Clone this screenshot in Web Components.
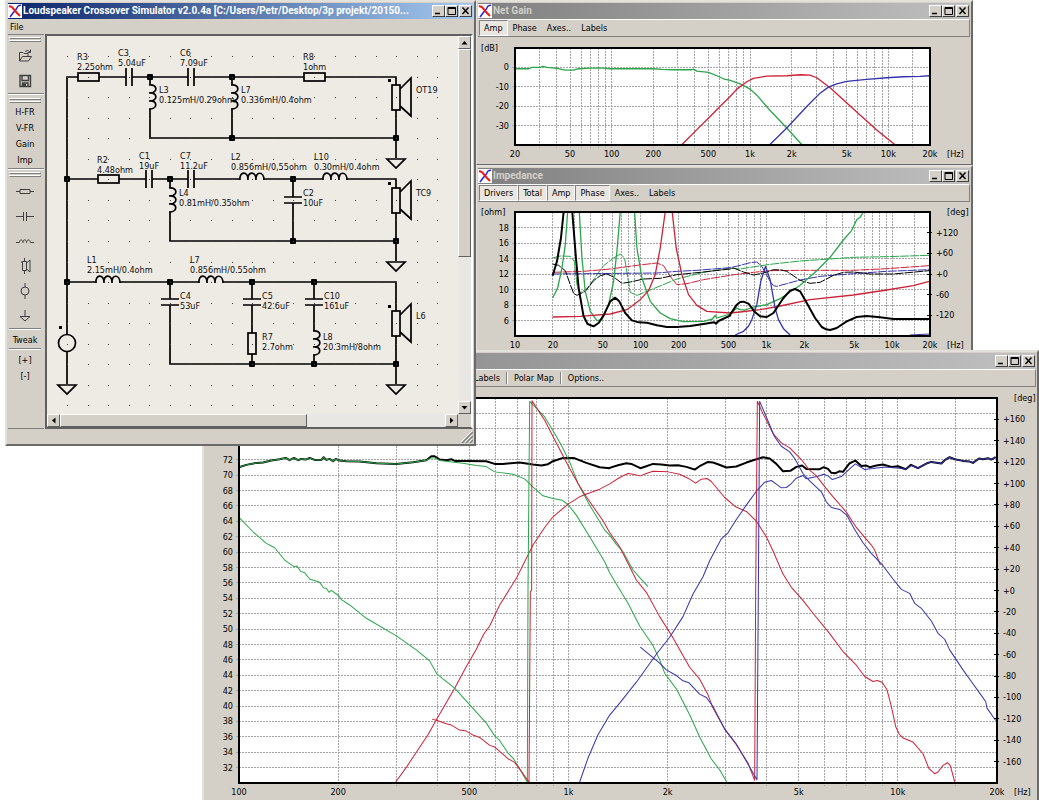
<!DOCTYPE html>
<html lang="en">
<head>
<meta charset="utf-8">
<title>Loudspeaker Crossover Simulator</title>
<style>
  html, body { height: 100%; }
  body {
    margin: 0; background: #fff; color: #000; overflow: hidden;
    font: 9px/12px "DejaVu Sans Condensed", "DejaVu Sans", sans-serif;
    --face: #d4d0c8; --shade: #808080; --light: #fff;
  }
</style>
</head>
<body>
<sim-desktop></sim-desktop>

<template id="t-desktop">
  <style>
    :host { display: block; position: relative; width: 100%; height: 100%; min-height: 800px; overflow: hidden; }
    sim-window { position: absolute; }
    .gain { left: 475px; top: 0; width: 498px; height: 166px; }
    .imp { left: 475px; top: 165px; width: 498px; height: 190px; }
    .resp { left: 202px; right: 0; top: 350px; height: 456px; }
    .main { left: 5px; top: 0; width: 471px; height: 446px; }
    .gain sim-chart { --left: 37px; --right: 40px; --plot: 97px; --top: 11px; }
    .imp sim-chart { --left: 37px; --right: 40px; --plot: 124px; --top: 10px; }
    .resp sim-chart { --left: 34px; --right: 39px; --plot: 385px; --top: 11px; }
  </style>
  <sim-window class="gain" caption="Net Gain">
    <tool-strip slot="bar" items="*Amp,Phase,Axes..,Labels"></tool-strip>
    <sim-chart kind="gain"></sim-chart>
  </sim-window>
  <sim-window class="imp" caption="Impedance">
    <tool-strip slot="bar" items="*Drivers,*Total,*Amp,*Phase,Axes..,Labels"></tool-strip>
    <sim-chart kind="imp"></sim-chart>
  </sim-window>
  <sim-window class="resp" caption="">
    <tool-strip slot="bar" class="far" items="Labels,|,Polar Map,|,Options.."></tool-strip>
    <sim-chart kind="resp"></sim-chart>
  </sim-window>
  <sim-window class="main" active caption="Loudspeaker Crossover Simulator v2.0.4a [C:/Users/Petr/Desktop/3p projekt/20150...">
    <sim-editor></sim-editor>
  </sim-window>
</template>

<template id="t-window">
  <style>
    :host {
      display: flex; flex-direction: column; box-sizing: border-box; overflow: hidden;
      padding: 1px; background: var(--face);
      border: 2px solid; border-color: #e4e1db #6a6a6a #6a6a6a #e4e1db;
    }
    header {
      flex: none; display: flex; align-items: center; gap: 1px; height: 16px;
      background: linear-gradient(90deg, #808080, #c0c0c0); color: #d4d0c8; padding: 0 1px 0 0;
    }
    :host([active]) header { background: linear-gradient(90deg, #0a246a, #a6caf0); color: #fff; }
    h1 { flex: 1; min-width: 0; margin: 0; font: bold 10px/14px Roboto, sans-serif; white-space: nowrap; overflow: hidden; }
    button {
      flex: none; width: 13px; height: 12px; padding: 0; margin: 0; background: var(--face);
      border: 1px solid; border-color: #fff #404040 #404040 #fff; display: block;
    }
    button svg { display: block; width: 11px; height: 10px; }
    .max { margin-left: -1px; }
    .icon { flex: none; width: 14px; height: 14px; background: #fff; }
  </style>
  <header>
    <svg class="icon" viewBox="0 0 14 14" aria-hidden="true">
      <path d="M2 13 L5 9 L8 5.500 L10 2 L13 1" fill="none" stroke="#2222e0" stroke-width="1.500"/>
      <path d="M1 2 L4 3 L9 9 L12 12" fill="none" stroke="#f01818" stroke-width="2"/>
    </svg>
    <h1></h1>
    <button aria-label="Minimize"><svg viewBox="0 0 11 10"><path d="M2 7.500H7" stroke="#000" stroke-width="1.500"/></svg></button>
    <button class="max" aria-label="Maximize"><svg viewBox="0 0 11 10"><path d="M2 1.500H9.500V8.500H2Z M2 2.500H9" fill="none" stroke="#000"/></svg></button>
    <button aria-label="Close"><svg viewBox="0 0 11 10"><path d="M2.500 1.500L8.500 8M8.500 1.500L2.500 8" stroke="#000" stroke-width="1.400"/></svg></button>
  </header>
  <slot name="bar"></slot>
  <slot></slot>
</template>

<template id="t-strip">
  <style>
    :host {
      flex: none; display: flex; align-items: stretch; box-sizing: border-box; height: 18px; padding: 0 1px;
      border-top: 1px solid #fff; border-right: 1px solid #808080; border-bottom: 1px solid #808080;
    }
    :host(.far) { padding-left: 264px; }
    button {
      font: inherit; color: inherit; background: none; border: 1px solid transparent; padding: 0 4px; margin: 0;
      white-space: nowrap;
    }
    button[aria-pressed=true] { background: #e9e6e1; border-color: #808080 #fff #fff #808080; }
    i { width: 1px; margin: 2px 1px; background: #808080; border-right: 1px solid #fff; }
  </style>
</template>

<template id="t-chart">
  <style>
    :host {
      flex: none; display: grid; padding-top: var(--top);
      grid-template-columns: var(--left) minmax(0, 1fr) var(--right);
      grid-template-rows: var(--plot) 17px;
    }
    svg { grid-area: 1 / 2; display: block; width: 100%; height: 100%; overflow: visible; }
    .y, .y2, .x { display: grid; }
    .y { grid-area: 1 / 1; }
    .y2 { grid-area: 1 / 3; }
    .x { grid-area: 2 / 2; align-items: center; }
    .y span, .y2 span { height: 0; display: flex; align-items: center; align-self: end; }
    .y span { justify-content: flex-end; padding-right: 6px; }
    .y2 span { padding-left: 6px; }
    .x span { width: 0; display: flex; justify-content: center; white-space: nowrap; }
    .unit { height: 0; display: flex; align-items: center; }
    .uy { grid-area: 1 / 1; padding-left: 3px; }
    .ux { grid-area: 2 / 3; padding-left: 17px; align-self: center; }
    .ud { grid-area: 1 / 3; padding-left: 17px; }
    .frame { fill: none; stroke: #000; stroke-width: 2; }
    .grid { stroke: #a4a4a4; stroke-dasharray: 2 1; fill: none; }
    .tick { stroke: #000; }
    polyline { fill: none; stroke-linejoin: round; }
    svg * { vector-effect: non-scaling-stroke; }
    .grid, .tick { shape-rendering: crispEdges; }
  </style>
  <div class="y"></div>
  <svg preserveAspectRatio="none" role="img"></svg>
  <div class="y2"></div>
  <div class="x"></div>
</template>

<template id="t-editor">
  <style>
    :host { flex: 1; min-height: 0; display: flex; flex-direction: column; }
    button { font: inherit; color: inherit; border: 0; background: none; padding: 0; margin: 0; }
    nav { flex: none; height: 15px; display: flex; align-items: center; padding-left: 2px; }
    .work { flex: 1; min-height: 0; display: flex; }
    .tools {
      flex: none; width: 36px; box-sizing: border-box; padding: 2px 3px 0 1px; display: flex; flex-direction: column; align-items: stretch;
      border-top: 1px solid #808080; border-bottom: 1px solid #808080; margin-right: 1px;
    }
    .tools button { height: 16px; flex: none; }
    .tools .pic { height: 25px; display: grid; place-items: center; }
    .grip { flex: none; height: 0; margin-bottom: 1px; border: 1px solid; border-color: #fff #808080 #808080 #fff; }
    .rule { flex: none; height: 1px; background: #808080; border-bottom: 1px solid #fff; margin: 0 -3px 0 -1px; }
    .short { margin: 0; }
    .gap { flex: none; height: 3px; }
    .gap.s { height: 2px; }
    .tools svg { display: block; width: 18px; height: 16px; fill: none; stroke: #404040; }
    .view {
      flex: 1; min-width: 0; display: grid; grid-template: minmax(0, 1fr) 13px / minmax(0, 1fr) 13px;
      border: 2px solid; border-color: #606060 #fff #606060 #606060; background: var(--face);
    }
    footer { flex: none; height: 14px; display: flex; justify-content: flex-end; align-items: flex-end; }
    footer svg { width: 12px; height: 12px; }
  </style>
  <nav><button>File</button></nav>
  <div class="work">
    <div class="tools">
      <div class="grip"></div><div class="grip"></div>
      <button class="pic" aria-label="Open"><svg viewBox="0 0 18 16"><path d="M3.500 13V4.500H7L8 5.500H12V8M3.500 13L6.500 8.500H15.500L12.500 13ZM9 3.500Q12 1 14 4M14.500 1.500V4.500H11.500"/></svg></button>
      <button class="pic" aria-label="Save"><svg viewBox="0 0 18 16"><path d="M4 2.500H14.500V13.500H4ZM6 2.500V7.500H12.500V2.500M6.500 13.500V10H12V13.500" stroke-width="1.400"/><path d="M7 11H9.500V13.500H7Z" fill="#404040"/></svg></button>
      <div class="rule"></div><div class="gap"></div>
      <div class="grip"></div><div class="grip"></div>
      <button>H-FR</button><button>V-FR</button><button>Gain</button><button>Imp</button>
      <div class="rule"></div><div class="gap s"></div>
      <div class="grip"></div><div class="grip"></div>
      <button class="pic" aria-label="Resistor"><svg viewBox="0 0 18 16"><path d="M0 8.500H4M14 8.500H18M4 6.500H14V10.500H4Z"/></svg></button>
      <button class="pic" aria-label="Capacitor"><svg viewBox="0 0 18 16"><path d="M0 8.500H7M11 8.500H18M7.500 4V13M10.500 4V13"/></svg></button>
      <button class="pic" aria-label="Inductor"><svg viewBox="0 0 18 16"><path d="M0 9.500H3.500C3.500 6 6.500 6 7 9.500C7 6 10.500 6 10.500 9.500C11 6 14 6 14.500 9.500H18"/></svg></button>
      <button class="pic" aria-label="Driver"><svg viewBox="0 0 18 16"><path d="M8.500 0V3M8.500 13V16M6.500 3.500H10.500V12.500H6.500ZM10.500 5L14 2V14L10.500 11M5 4H6.500"/></svg></button>
      <button class="pic" aria-label="Source"><svg viewBox="0 0 18 16"><circle cx="9" cy="8" r="4"/><path d="M9 0V4M9 12V16"/></svg></button>
      <button class="pic" aria-label="Ground"><svg viewBox="0 0 18 16"><path d="M9 2V8M4 8.500H14L9 13Z"/></svg></button>
      <div class="rule short"></div><div class="gap s"></div>
      <button>Tweak</button>
      <div class="rule short"></div><div class="gap s"></div>
      <button>[+]</button><button>[-]</button>
    </div>
    <div class="view">
      <sim-schematic></sim-schematic>
      <scroll-bar></scroll-bar>
      <scroll-bar horizontal></scroll-bar>
    </div>
  </div>
  <footer><svg viewBox="0 0 12 12" aria-hidden="true"><path d="M1 12L12 1M5 12L12 5M9 12L12 9" stroke="#808080" stroke-width="1.500"/><path d="M0 11L11 0M4 11L11 4M8 11L11 8" stroke="#fff"/></svg></footer>
</template>

<template id="t-scroll">
  <style>
    :host { display: flex; flex-direction: column; background: #e9e7e3; }
    :host([horizontal]) { flex-direction: row; }
    button {
      flex: none; width: 13px; height: 13px; box-sizing: border-box; padding: 0; margin: 0; background: var(--face);
      border: 1px solid; border-color: #fff #606060 #606060 #fff;
    }
    button svg { display: block; width: 11px; height: 11px; }
    .thumb { flex: none; box-sizing: border-box; height: 55%; background: var(--face); border: 1px solid; border-color: #fff #606060 #606060 #fff; }
    :host([horizontal]) .thumb { height: auto; width: 60%; }
    .free { flex: 1; }
    :host([horizontal]) svg { transform: rotate(-90deg); }
  </style>
  <button aria-label="Back"><svg viewBox="0 0 11 11"><path d="M2.500 7.500L5.500 4L8.500 7.500Z"/></svg></button>
  <div class="thumb"></div><div class="free"></div>
  <button aria-label="Forward"><svg viewBox="0 0 11 11"><path d="M2.500 4L5.500 7.500L8.500 4Z"/></svg></button>
</template>

<template id="t-schematic">
  <style>
    :host { display: block; overflow: hidden; background: #eeeae4; }
    svg { display: block; width: 410px; height: 378px; }
    .w { fill: none; stroke: #000; stroke-width: 1.700; }
    .o { fill: #eeeae4; stroke: #000; stroke-width: 1.700; }
    text { fill: #101010; }
  </style>
  <svg role="img" aria-label="Crossover schematic"></svg>
</template>

<script>
const attach = (el, id) => {
  const root = el.attachShadow({ mode: 'open' });
  root.append(document.getElementById(id).content.cloneNode(true));
  return root;
};

customElements.define('tool-strip', class extends HTMLElement {
  connectedCallback() {
    if (this.shadowRoot) return;
    const root = attach(this, 't-strip');
    for (const item of this.getAttribute('items').split(',')) {
      if (item === '|') { root.append(document.createElement('i')); continue; }
      const b = document.createElement('button');
      b.textContent = item.replace('*', '');
      if (item[0] === '*') b.setAttribute('aria-pressed', 'true');
      root.append(b);
    }
  }
});

customElements.define('scroll-bar', class extends HTMLElement {
  connectedCallback() { if (!this.shadowRoot) attach(this, 't-scroll'); }
});

customElements.define('sim-window', class extends HTMLElement {
  connectedCallback() {
    if (this.shadowRoot) return;
    attach(this, 't-window').querySelector('h1').textContent = this.getAttribute('caption');
  }
});

/* Curves are sampled at a third of a pixel; the plot's left part and right part
   have their own origins, subtracted here. */
const shift = (dx, dy, s) => s.trim().split(/\s+/).map(p => {
  const [x, y] = p.split(',').map(Number);
  return (x - dx) + ',' + (y - dy);
}).join(' ');
const GREEN = '#2aa54a', RED = '#cc2238', BLUE = '#3434ac', BLACK = '#000';

const sA = s => shift(134, 143, s), sB = s => shift(-616, 143, s);
const iA = s => shift(134, 142, s), iB = s => shift(-616, 142, s);
const rA = s => shift(118, 23, s), rB = s => shift(-1112, 23, s);

const CHARTS = {
  gain: {
    label: 'Net gain', w: 1246, h: 290, f: [20, 20000], xt: [20, 50, 100, 200, 500, 1000, 2000, 5000, 10000, 20000],
    y: [-40, 10], yt: [0, -10, -20, -30], yg: 10, uy: '[dB]',
    curves: [
      [GREEN, 1.3, '', sA('134,205 175,205 185,201 210,201 218,198 230,201 260,204 285,209 310,209 325,205 360,203 400,203 420,205 550,205 575,207 610,208 665,208 670,206 680,212 715,216 740,226 760,235 780,240') + ' ' + sB('60,250 90,266 110,284 150,330 200,382 246,433')],
      [RED, 1.3, '', sA('634,433 680,387 720,348 750,317 780,288') + ' ' + sB('50,266 80,244 100,234 140,227 200,226 240,223 270,224 290,232 330,262 420,343 470,388 526,433')],
      [BLUE, 1.3, '', sB('148,433 200,382 260,318 300,278 325,260 350,250 380,243 440,237 500,232 550,229 600,228 628,226')]
    ]
  },
  imp: {
    label: 'Impedance', w: 1246, h: 372, f: [10, 20000], xt: [10, 20, 50, 100, 200, 500, 1000, 2000, 5000, 10000, 20000],
    y: [4, 20], yt: [18, 16, 14, 12, 10, 8, 6], yg: 2, uy: '[ohm]', dt: [120, 60, 0, -60, -120],
    curves: [
      [GREEN, 1, '9 1', iA('247,280 270,274 300,275 312,290 320,360 328,385 350,372 400,303 430,280 450,268 463,280 480,383 500,392 550,372 620,343 700,323 780,310') + ' ' + iB('60,313 90,308 150,299 240,289 300,285 400,278 500,276 628,272')],
      [RED, 1, '9 1', iA('247,323 340,320 420,313 500,302 560,295 580,303 600,335 620,360 650,357 700,345 780,332') + ' ' + iB('50,329 100,323 150,318 250,317 400,317 500,312 628,303')],
      [BLUE, 1, '9 1', iA('247,328 560,325 620,320 680,317 780,309') + ' ' + iB('60,302 90,294 110,292 125,305 150,350 160,363 170,365 200,357 240,346 300,335 400,327 500,320 628,315')],
      [BLACK, 1, '9 1', iA('247,298 265,302 285,318 300,360 310,386 320,392 345,380 370,348 390,333 410,328 430,337 455,356 480,352 520,343 570,341 620,330 700,322 780,313') + ' ' + iB('40,310 70,322 100,331 130,325 160,315 185,316 200,320 240,347 270,356 300,353 340,332 370,323 400,322 450,328 520,328 628,318')],
      [GREEN, 1.3, '', iA('247,400 262,370 275,310 285,240 292,142')],
      [GREEN, 1.3, '', iA('327,142 335,280 345,380 360,440 380,468 395,465 415,420 430,350 440,260 450,142')],
      [GREEN, 1.3, '', iA('493,142 500,250 515,340 540,410 570,445 600,462 640,471 700,470 727,463 735,452 740,460 780,448') + ' ' + iB('50,430 60,435 75,436 100,427 140,420 180,402 240,362 290,318 330,278 370,226 395,197 410,165 420,158 430,142')],
      [RED, 1.3, '', iA('247,457 330,455 420,448 470,435 510,405 535,378 555,330 570,250 585,142')],
      [RED, 1.3, '', iA('606,142 618,250 635,330 655,390 680,422 710,440 780,445') + ' ' + iB('60,442 120,435 180,424 270,405 400,391 500,376 580,363 628,350')],
      [BLUE, 1.3, '', iB('45,511 70,500 85,485 95,465 110,420 122,350 136,305 150,345 165,430 175,465 190,492 210,511')],
      [BLUE, 1, '', iB('570,511 628,508')],
      [BLACK, 2, '', iA('247,333 260,290 272,220 280,142')],
      [BLACK, 2, '', iA('306,142 317,280 325,370 340,455 352,478 370,485 385,475 400,452 420,410 435,399 447,410 465,445 485,467 505,473 530,474 560,482 590,487 620,487 660,484 700,478 732,473 738,477 745,469 780,453') + ' ' + iB('30,450 50,420 60,412 70,411 85,417 105,443 120,455 140,457 160,445 190,400 210,378 225,373 240,380 260,415 285,460 305,487 318,494 330,496 350,490 380,470 410,457 440,454 480,458 520,463 628,463')]
    ]
  },
  resp: {
    label: 'Frequency response', w: 2274, h: 1157, f: [100, 20000], xt: [100, 200, 500, 1000, 2000, 5000, 10000, 20000],
    y: [30, 80], yt: [72, 70, 68, 66, 64, 62, 60, 58, 56, 54, 52, 50, 48, 46, 44, 42, 40, 38, 36, 34, 32], yg: 2,
    dt: [160, 140, 120, 100, 80, 60, 40, 20, 0, -20, -40, -60, -80, -100, -120, -140, -160],
    curves: [
      [BLACK, 2, '', rA('118,231 140,224 170,218 190,217 215,211 240,207 258,203 270,210 283,203 295,210 305,206 318,208 330,203 345,209 365,209 372,201 380,209 390,206 400,213 408,206 420,211 440,213 480,214 530,219 590,221 640,216 680,210 695,198 705,198 720,208 740,210 755,207 765,212 800,212 860,213 885,221 910,221 960,217 1000,223 1025,226 1045,222 1060,213 1090,203 1122,203 1160,218 1200,231 1230,234') + ' ' + rB('0,233 25,225 50,219 65,221 92,234 110,228 130,221 155,223 180,226 205,225 230,230 255,238 270,228 295,215 310,217 325,222 350,232 380,229 410,217 440,207 460,201 480,205 500,221 520,243 542,242 560,230 577,226 590,236 630,237 642,231 655,236 665,248 678,249 690,243 700,245 720,219 737,211 755,227 770,226 780,231 800,226 820,223 845,230 865,228 888,237 904,224 925,234 950,220 965,215 995,220 1005,210 1020,201 1035,207 1060,212 1080,214 1090,218 1108,205 1120,207 1135,204 1145,208 1158,201')],
      [GREEN, 1, '', rA('118,231 140,224 170,218 190,217 215,211 240,207 258,203 270,210 283,203 295,210 305,206 318,208 330,203 345,209 365,209 372,201 380,209 390,206 400,213 408,206 420,211 440,213 480,214 530,219 590,221 640,216 680,210 695,203 705,203 720,211 790,219 830,226 860,229 885,245 940,252 975,266 1000,291 1030,317 1060,325 1087,330 1105,343 1130,375 1170,440 1215,515') + ' ' + rB('0,548 25,590 55,640 90,708 130,767 150,810 165,850 200,897 240,975 270,1042 305,1108 330,1140 353,1180')],
      [RED, 1, '', rA('586,1180 622,1130 645,1095 685,1035 710,990 765,895 800,830 830,778 852,733 870,708 900,645 950,565 1000,465 1035,412 1060,380 1105,342 1140,320 1155,314 1200,297') + ' ' + rB('0,281 30,262 55,250 70,252 92,257 110,250 130,243 175,245 210,252 235,264 258,279 275,267 292,265 305,274 345,322 378,350 410,364 440,393 470,440 490,483 520,552 545,592 575,625 610,670 660,731 700,785 740,826 765,860 790,875 803,872 818,878 832,900 845,950 858,1010 868,1032 880,1045 910,1057 940,1092 958,1137 975,1152 985,1147 1000,1127 1013,1119 1022,1128 1036,1180')],
      [BLUE, 1, '', rA('1139,1180 1165,1105 1195,1035') + ' ' + rB('0,976 30,940 80,877 140,793 180,742 220,680 250,612 280,560 300,512 335,446 355,428 380,388 410,345 440,303 465,276 485,271 500,282 515,293 530,292 545,280 560,264 580,256 590,266 625,258 642,252 655,257 668,268 695,259 720,236 737,221 765,238 790,235 825,230 860,233 888,237 904,226 925,234 950,220 965,215 995,220 1005,210 1020,201 1035,207 1060,212 1080,214 1090,218 1108,205 1120,207 1135,204 1145,208 1158,201')],
      [GREEN, 1, '', rA('118,382 160,425 200,460 225,473 255,510 283,530 292,528 303,544 315,548 330,567 360,577 372,594 380,595 388,607 395,601 418,618 425,629 450,645 500,685 590,738 650,780 690,813 712,853 765,895 860,1000 885,1038 900,1052 925,1090 940,1105 960,1137 983,1178 985,605 990,33 1035,80 1065,130 1085,165 1110,215 1135,280 1170,345 1215,420') + ' ' + rB('0,435 20,463 40,485 70,540 95,568 115,590')],
      [RED, 1, '', rA('697,988 715,993 740,1002 755,1006 780,1021 800,1024 820,1036 840,1043 870,1067 885,1072 925,1107 945,1118 965,1145 988,1178 992,605 996,600 997,31 1035,90 1070,158 1110,235 1135,280 1160,320 1210,392') + ' ' + rB('0,427 30,470 80,570 110,607 150,680 185,735 240,832 270,868 295,915 310,955 345,1018 380,1065 415,1120 435,1172 438,605 443,33 460,70 490,130 515,158 540,173 575,208 600,240 620,257 660,308 710,366 740,412 765,442 785,465 795,480 812,525')],
      [BLUE, 1, '', rB('92,772 150,820 170,840 200,857 220,873 238,879 270,913 290,923 310,950 345,1018 380,1063 442,1170 446,605 450,33 470,80 495,140 515,168 540,185 555,205 580,250 600,272 635,305 650,335 665,352 690,358 712,376 735,418 760,458 785,490 820,527 850,567 875,598 900,610 915,640 935,655 965,693 985,730 1005,748 1020,780 1060,840 1085,875 1110,910 1128,935 1132,955 1158,992')]
    ]
  }
};

customElements.define('sim-chart', class extends HTMLElement {
  connectedCallback() {
    if (this.shadowRoot) return;
    const c = CHARTS[this.getAttribute('kind')];
    const root = attach(this, 't-chart');
    const [f0, f1] = c.f, [y0, y1] = c.y;
    const px = f => Math.log(f / f0) / Math.log(f1 / f0) * c.w;
    const py = v => (y1 - v) / (y1 - y0) * c.h;
    const pd = v => (180 - v) / 360 * c.h;

    const svg = root.querySelector('svg');
    svg.setAttribute('viewBox', `0 0 ${c.w} ${c.h}`);
    svg.setAttribute('aria-label', c.label);
    let g = `<rect width="${c.w}" height="${c.h}" fill="#fff"/>`;
    for (let d = 10; d <= 10000; d *= 10)
      for (let k = 1; k < 10; k++) {
        const f = d === 10000 && k === 2 ? 15000 : d * k;
        if (f > f0 && f < f1) g += `<path class="grid" d="M${px(f)} 0V${c.h + 9}"/>`;
      }
    for (let v = y0 + c.yg; v < y1; v += c.yg) g += `<path class="grid" d="M-9 ${py(v)}H${c.w}"/>`;
    for (const [col, w, dash, pts] of c.curves)
      g += `<polyline points="${pts}" stroke="${col}" stroke-width="${w}" stroke-dasharray="${dash || 'none'}"/>`;
    g += `<rect class="frame" width="${c.w}" height="${c.h}"/>`;
    for (const v of c.dt || []) g += `<path class="tick" d="M${c.w - 9} ${pd(v)}H${c.w + 6}"/>`;
    svg.innerHTML = g;

    const add = (host, text) => {
      const s = document.createElement('span'); s.textContent = text; host.append(s);
    };
    const rows = (host, ticks, pos, fmt) => {
      let last = 0, t = [];
      for (const v of ticks) { t.push((pos(v) - last).toFixed(0) + 'fr'); last = pos(v); add(host, fmt(v)); }
      t.push((c.h - last).toFixed(0) + 'fr');
      host.style.gridTemplateRows = t.join(' ');
    };
    rows(root.querySelector('.y'), c.yt, py, String);
    if (c.dt) rows(root.querySelector('.y2'), c.dt, pd, v => (v < 0 ? '' : '+') + v);

    const x = root.querySelector('.x');
    x.style.gridTemplateColumns = c.xt.map((f, i) =>
      i + 1 < c.xt.length ? (px(c.xt[i + 1]) - px(f)).toFixed(0) + 'fr' : '0').join(' ');
    c.xt.forEach(f => add(x, f >= 1000 ? f / 1000 + 'k' : f));

    const unit = (cls, text) => {
      const d = document.createElement('div'); d.className = 'unit ' + cls; d.textContent = text; root.append(d);
    };
    if (c.uy) unit('uy', c.uy);
    if (c.dt) unit('ud', '[deg]');
    unit('ux', '[Hz]');
  }
});

customElements.define('sim-schematic', class extends HTMLElement {
  connectedCallback() {
    if (this.shadowRoot) return;
    const svg = attach(this, 't-schematic').querySelector('svg');
    let s = '', t = '';
    const wire = d => s += `<path class="w" d="${d}"/>`;
    const node = (x, y) => s += `<rect x="${x - 3}" y="${y - 3}" width="6" height="6" rx="1"/>`;
    const text = (x, y, a, b) => {
      t += `<text x="${x}" y="${y}">${a}</text>` + (b ? `<text x="${x}" y="${y + 10}">${b}</text>` : '');
    };
    const turn = (x, y, v) => `transform="translate(${x} ${y})${v ? ' rotate(90)' : ''}"`;
    const gapRect = (a, b) => `<rect x="${a}" y="-2" width="${b - a}" height="4" fill="#eeeae4"/>`;
    const res = (x, y, v) => s += `<rect class="o" ${turn(x, y, v)} x="-10" y="-4" width="21" height="8"/>`;
    const cap = (x, y, v) => s += `<g ${turn(x, y, v)}>${gapRect(-3, 3)}<path class="w" d="M-3 -9V9M3 -9V9"/></g>`;
    const coil = (x, y, v) => s += `<g ${turn(x, y, v)}>${gapRect(-12, 12)}<path class="w" d="M-12 1C-13 -8 -4 -8 -4 0M-4 1C-5 -8 4 -8 4 0M4 1C3 -8 12 -8 12 1"/></g>`;
    const gnd = (x, y) => s += `<path class="w" d="M${x - 9} ${y}H${x + 9}L${x} ${y + 9}Z"/>`;
    const drv = (x, y) => s += `<rect x="${x - 8}" y="${y - 18}" width="3" height="3"/><path class="w" d="M${x + 4} ${y - 8}L${x + 15} ${y - 19}V${y + 19}L${x + 4} ${y + 9}"/><rect class="o" x="${x - 4}" y="${y - 12}" width="8" height="25"/>`;

    wire('M67 384V77H396V158M150 77V138H396M232 77V138');
    wire('M67 179H396V261M170 179V241H396M293 179V241');
    wire('M67 282H396V384M170 282V364H396M252 282V364M314 282V364');
    [[150, 77], [232, 77], [232, 138], [396, 138], [67, 179], [170, 179], [293, 179], [293, 241], [396, 241],
     [67, 282], [170, 282], [252, 282], [314, 282], [252, 364], [314, 364], [396, 364]].forEach(p => node(...p));
    res(88, 77); res(314, 77); res(108, 179); res(252, 343, 1);
    cap(129, 77); cap(191, 77); cap(149, 179); cap(191, 179);
    cap(293, 200, 1); cap(170, 302, 1); cap(252, 302, 1); cap(314, 302, 1);
    coil(252, 179); coil(335, 179); coil(108, 282); coil(211, 282);
    coil(150, 97, 1); coil(232, 97, 1); coil(170, 200, 1); coil(314, 343, 1);
    drv(396, 97); drv(396, 200); drv(396, 323);
    gnd(396, 159); gnd(396, 262); gnd(396, 385); gnd(67, 385);
    s += '<circle class="o" cx="67" cy="343" r="8.5"/><rect x="59" y="326" width="3" height="3"/>';

    text(77, 60, 'R3', '2.25ohm'); text(118, 56, 'C3', '5.04uF'); text(180, 56, 'C6', '7.09uF'); text(303, 60, 'R8', '1ohm');
    text(159, 93, 'L3', '0.125mH/0.29ohm'); text(241, 93, 'L7', '0.336mH/0.4ohm'); text(416, 93, 'OT19');
    text(97, 163, 'R2', '4.48ohm'); text(139, 159, 'C1', '19uF'); text(180, 159, 'C7', '11.2uF');
    text(231, 160, 'L2', '0.856mH/0,55ohm'); text(314, 160, 'L10', '0.30mH/0.4ohm');
    text(179, 196, 'L4', '0.81mH/0.35ohm'); text(303, 196, 'C2', '10uF'); text(416, 196, 'TC9');
    text(87, 263, 'L1', '2.15mH/0.4ohm'); text(190, 263, 'L7', '0.856mH/0.55ohm');
    text(180, 299, 'C4', '53uF'); text(262, 299, 'C5', '42.6uF'); text(324, 299, 'C10', '161uF');
    text(262, 340, 'R7', '2.7ohm'); text(323, 340, 'L8', '20.3mH/8ohm'); text(416, 319, 'L6');

    let dots = '';
    for (let j = 0; j < 18; j++) for (let i = 0; i < 19; i++)
      dots += `M${Math.round(67 + i * 20.58)} ${Math.round(56 + j * 20.55)}h1v1h-1z`;
    svg.innerHTML = `<g transform="translate(-47 -36)">${s}<path d="${dots}" fill="#444"/>${t}</g>`;
  }
});

customElements.define('sim-editor', class extends HTMLElement {
  connectedCallback() { if (!this.shadowRoot) attach(this, 't-editor'); }
});

customElements.define('sim-desktop', class extends HTMLElement {
  connectedCallback() { if (!this.shadowRoot) attach(this, 't-desktop'); }
});
</script>
</body>
</html>
